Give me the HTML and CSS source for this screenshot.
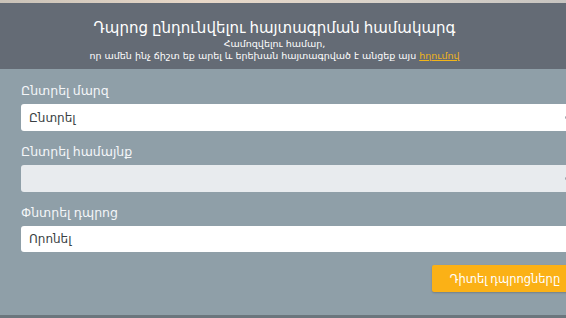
FILE: index.html
```html
<!DOCTYPE html>
<html lang="hy">
<head>
	<meta charset="utf-8">
	<title>Դպրոց ընդունվելու հայտագրման համակարգ</title>
	<meta name="viewport" content="width=device-width, initial-scale=1">
	<link rel="stylesheet" href="styles.css">
</head>
<body>
	<div class="topline"></div>
	<div class="header">
		<h2>Դպրոց ընդունվելու հայտագրման համակարգ</h2>
		<p>Համոզվելու համար,</p>
		<p>որ ամեն ինչ ճիշտ եք արել և երեխան հայտագրված է անցեք այս <a href="#">հղումով</a></p>
	</div>
	<div class="main">
		<div class="field">
			<label for="region">Ընտրել մարզ</label>
			<div class="select" id="region">Ընտրել<span class="caret"></span></div>
		</div>
		<div class="field">
			<label for="community">Ընտրել համայնք</label>
			<div class="select disabled" id="community"><span class="caret"></span></div>
		</div>
		<div class="field">
			<label for="school">Փնտրել դպրոց</label>
			<div class="input" id="school">Որոնել</div>
		</div>
		<div class="actions">
			<button class="btn">Դիտել դպրոցները</button>
		</div>
	</div>
	<div class="bottomline"></div>
</body>
</html>
```

FILE: styles.css
```css
body {
	margin: 0;
	overflow: hidden;
	background: #6b767d;
	font-family: "Noto Sans", "DejaVu Sans", sans-serif;
}
.topline {
	height: 3px;
	background: linear-gradient(to right, #c9c2b8, #e8d8c8 35%, #d8d2ca 70%, #c7c4c0);
}
.header {
	background: #646b75;
	height: 66px;
	box-sizing: border-box;
	padding: 15px 17px 0 0;
	text-align: center;
	color: #fff;
}
.header h2 {
	margin: 0 0 2px;
	font-size: 15px;
	font-weight: normal;
	line-height: 18px;
}
.header p {
	margin: 0;
	font-family: "DejaVu Sans", sans-serif;
	font-size: 9.5px;
	line-height: 12px;
}
.header a {
	color: #f2b519;
}
.main {
	background: #8f9fa8;
	height: 246px;
	box-sizing: border-box;
	padding: 14px 0 0 21px;
	width: 578px;
}
.field {
	display: flex;
	flex-direction: column;
	margin-bottom: 13px;
}
.field label {
	color: #f4f6f8;
	font-size: 12.5px;
	line-height: 16px;
	margin-bottom: 5px;
}
.select, .input {
	position: relative;
	height: 27px;
	box-sizing: border-box;
	padding: 0 8px;
	border-radius: 3px;
	background: #fff;
	color: #3a3f44;
	font-size: 12px;
	line-height: 27px;
}
.input {
	height: 26px;
	line-height: 26px;
}
.select.disabled {
	background: #e8ebee;
}
.caret {
	position: absolute;
	right: 10px;
	top: 12px;
	width: 3px;
	height: 3px;
	border-radius: 50%;
	background: #9aa3aa;
}
.actions {
	display: flex;
	justify-content: flex-end;
	margin-top: 5px;
}
.btn {
	width: 146px;
	height: 27px;
	border: 0;
	border-radius: 2px;
	background: #fbb116;
	color: #fff;
	font-family: inherit;
	font-size: 11.5px;
	box-shadow: 0 1px 2px rgba(0, 0, 0, 0.2);
}
```
